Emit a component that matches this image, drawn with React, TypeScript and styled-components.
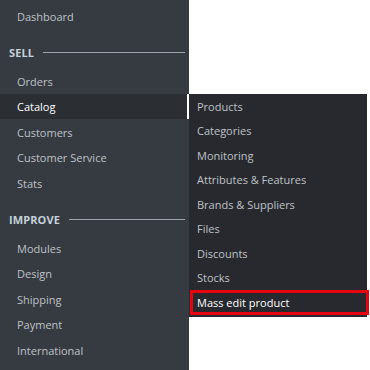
import React from 'react'
import styled, { createGlobalStyle } from 'styled-components'

const SIDEBAR_BG = '#363a41'
const ACTIVE_BG = '#2b2e33'
const SUBMENU_BG = '#27292e'
const TEXT = '#bfc2c6'
const SECTION_TEXT = '#c4d2d9'
const ANNOTATION_RED = '#e5040f'

const GlobalStyle = createGlobalStyle`
  html, body {
    margin: 0;
    padding: 0;
    background: #ffffff;
  }
  body {
    font-family: 'Open Sans', 'Noto Sans', sans-serif;
    -webkit-font-smoothing: antialiased;
  }
`

type Entry =
  | { kind: 'item'; label: string; active?: boolean }
  | { kind: 'section'; label: string }

const MENU: Entry[] = [
  { kind: 'item', label: 'Dashboard' },
  { kind: 'section', label: 'Sell' },
  { kind: 'item', label: 'Orders' },
  { kind: 'item', label: 'Catalog', active: true },
  { kind: 'item', label: 'Customers' },
  { kind: 'item', label: 'Customer Service' },
  { kind: 'item', label: 'Stats' },
  { kind: 'section', label: 'Improve' },
  { kind: 'item', label: 'Modules' },
  { kind: 'item', label: 'Design' },
  { kind: 'item', label: 'Shipping' },
  { kind: 'item', label: 'Payment' },
  { kind: 'item', label: 'International' },
]

const CATALOG_CHILDREN = [
  'Products',
  'Categories',
  'Monitoring',
  'Attributes & Features',
  'Brands & Suppliers',
  'Files',
  'Discounts',
  'Stocks',
  'Mass edit product',
]

export default function App() {
  return (
    <>
      <GlobalStyle />
      <Page>
        <Sidebar>
          <Nav>
            {MENU.map((entry) =>
              entry.kind === 'section' ? (
                <SectionTitle key={entry.label}>
                  <span>{entry.label}</span>
                  <Rule />
                </SectionTitle>
              ) : (
                <NavItem key={entry.label} active={!!entry.active}>
                  {entry.label}
                  {entry.active && (
                    <Submenu>
                      {CATALOG_CHILDREN.map((child) => (
                        <SubItem
                          key={child}
                          marked={child === 'Mass edit product'}
                        >
                          {child}
                        </SubItem>
                      ))}
                    </Submenu>
                  )}
                </NavItem>
              )
            )}
          </Nav>
        </Sidebar>
        <Main />
      </Page>
    </>
  )
}

const Page = styled.div`
  display: flex;
  width: 370px;
  height: 370px;
  overflow: hidden;
`

const Sidebar = styled.aside`
  width: 189px;
  flex-shrink: 0;
  background: ${SIDEBAR_BG};
  padding-top: 3.25px;
  position: relative;
  z-index: 2;
`

const Nav = styled.nav`
  display: flex;
  flex-direction: column;
`

const NavItem = styled.div<{ active: boolean }>`
  position: relative;
  height: 25.5px;
  display: flex;
  align-items: center;
  padding-left: 17px;
  width: 187px;
  box-sizing: border-box;
  font-size: 11px;
  color: ${(props) => (props.active ? '#ffffff' : TEXT)};
  background: ${(props) => (props.active ? ACTIVE_BG : 'transparent')};
  border-right: ${(props) => (props.active ? '2px solid #ffffff' : 'none')};
  width: ${(props) => (props.active ? '189px' : '187px')};
  height: ${(props) => (props.active ? '25px' : '25.5px')};
  margin-bottom: ${(props) => (props.active ? '0.5px' : '0')};
`

const SectionTitle = styled.div`
  display: flex;
  align-items: center;
  gap: 9px;
  height: 39.5px;
  box-sizing: border-box;
  padding: 14px 4px 6.5px 9px;
  font-size: 11px;
  font-weight: 700;
  text-transform: uppercase;
  color: ${SECTION_TEXT};
  letter-spacing: 0.1px;
`

const Rule = styled.div`
  flex: 1;
  height: 1px;
  background: #9ea4ab;
`

const Submenu = styled.div`
  position: absolute;
  left: 189px;
  top: 0;
  width: 178px;
  padding-bottom: 2.5px;
  background: ${SUBMENU_BG};
  display: flex;
  flex-direction: column;
`

const SubItem = styled.div<{ marked: boolean }>`
  position: relative;
  height: 24.5px;
  display: flex;
  align-items: center;
  padding-left: 8px;
  font-size: 11px;
  color: ${(props) => (props.marked ? '#ffffff' : TEXT)};

  &::after {
    content: '';
    display: ${(props) => (props.marked ? 'block' : 'none')};
    position: absolute;
    left: 1px;
    right: -2px;
    top: 0.5px;
    bottom: -1px;
    border: 3px solid ${ANNOTATION_RED};
  }
`

const Main = styled.main`
  flex: 1;
  background: #ffffff;
`
